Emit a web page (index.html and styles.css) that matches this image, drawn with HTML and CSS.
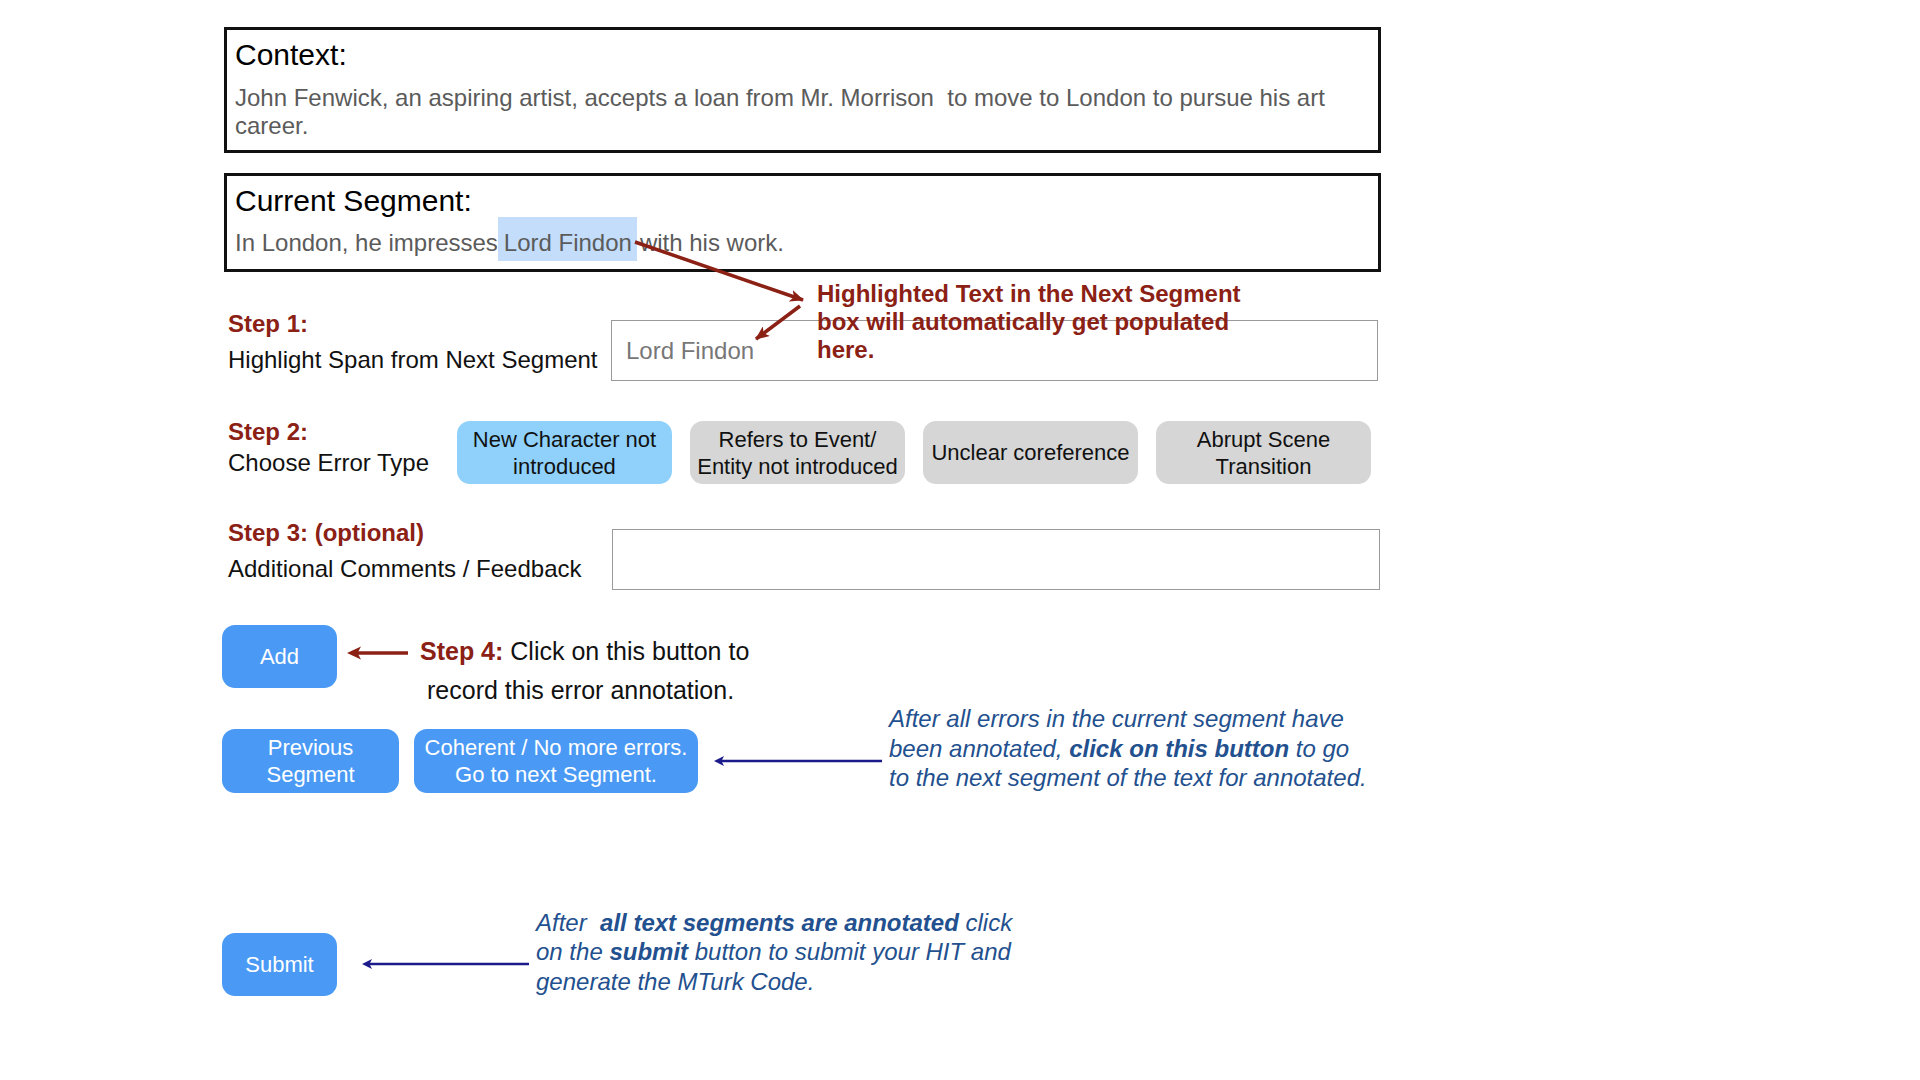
FILE: index.html
```html
<!DOCTYPE html>
<html lang="en">
<head>
<meta charset="utf-8">
<title>Annotation Instructions</title>
<link rel="stylesheet" href="styles.css">
</head>
<body>
<div class="page">
  <div class="box box-context">
    <div class="box-title">Context:</div>
    <div class="box-text">John Fenwick, an aspiring artist, accepts a loan from Mr. Morrison&nbsp; to move to London to pursue his art career.</div>
  </div>
  <div class="box box-segment">
    <div class="box-title">Current Segment:</div>
    <div class="box-text">In London, he impresses<span class="hl">Lord Findon</span>with his work.</div>
  </div>

  <div class="step-row step1">
    <div class="labels">
      <div class="step-label">Step 1:</div>
      <div class="step-desc">Highlight Span from Next Segment</div>
    </div>
    <div class="field">Lord Findon</div>
  </div>

  <div class="step-row step2">
    <div class="labels">
      <div class="step-label">Step 2:</div>
      <div class="step-desc">Choose Error Type</div>
    </div>
    <div class="choices">
      <div class="choice active">New Character not<br>introduced</div>
      <div class="choice">Refers to Event/<br>Entity not introduced</div>
      <div class="choice">Unclear coreference</div>
      <div class="choice">Abrupt Scene<br>Transition</div>
    </div>
  </div>

  <div class="step-row step3">
    <div class="labels">
      <div class="step-label">Step 3: (optional)</div>
      <div class="step-desc">Additional Comments / Feedback</div>
    </div>
    <div class="field"></div>
  </div>

  <div class="action-row add-row">
    <div class="btn btn-add">Add</div>
    <svg class="arrow arrow-add" width="61" height="63" viewBox="0 0 61 63">
      <line x1="9" y1="28" x2="61" y2="28" stroke="#8b2015" stroke-width="3.5"/>
      <path d="M0 28 L14 21.5 L10.5 28 L14 34.5 Z" fill="#8b2015"/>
    </svg>
    <div class="step4">
      <div><b>Step 4:</b> Click on this button to</div>
      <div class="step4-indent">record this error annotation.</div>
    </div>
  </div>

  <div class="action-row nav-row">
    <div class="btn btn-prev">Previous<br>Segment</div>
    <div class="btn btn-next">Coherent / No more errors.<br>Go to next Segment.</div>
    <svg class="arrow arrow-next" width="168" height="64" viewBox="0 0 168 64">
      <line x1="7" y1="32" x2="168" y2="32" stroke="#1b1b8c" stroke-width="2.5"/>
      <path d="M0 32 L10 27 L7.5 32 L10 37 Z" fill="#1b1b8c"/>
    </svg>
    <div class="note">After all errors in the current segment have<br>been annotated, <b>click on this button</b> to go<br>to the next segment of the text for annotated.</div>
  </div>

  <div class="action-row submit-row">
    <div class="btn btn-submit">Submit</div>
    <svg class="arrow arrow-submit" width="167" height="63" viewBox="0 0 167 63">
      <line x1="7" y1="31" x2="167" y2="31" stroke="#1b1b8c" stroke-width="2.5"/>
      <path d="M0 31 L10 26 L7.5 31 L10 36 Z" fill="#1b1b8c"/>
    </svg>
    <div class="note">After&nbsp; <b>all text segments are annotated</b> click<br>on the <b>submit</b> button to submit your HIT and<br>generate the MTurk Code.</div>
  </div>

  <svg class="overlay-arrows" width="1157" height="400" viewBox="0 0 1157 400">
    <defs>
      <marker id="redhead" viewBox="0 0 14 12" refX="13" refY="6" markerWidth="14" markerHeight="12" markerUnits="userSpaceOnUse" orient="auto">
        <path d="M0 0 L14 6 L0 12 L3.5 6 Z" fill="#8b2015"/>
      </marker>
    </defs>
    <line x1="411" y1="242" x2="579" y2="300" stroke="#8b2015" stroke-width="3.5" marker-end="url(#redhead)"/>
    <line x1="576" y1="306" x2="532" y2="339" stroke="#8b2015" stroke-width="3.5" marker-end="url(#redhead)"/>
  </svg>
  <div class="annot">Highlighted Text in the Next Segment<br>box will automatically get populated<br>here.</div>
</div>
</body>
</html>
```

FILE: styles.css
```css
body {
  margin: 0;
  background: #ffffff;
  font-family: "Liberation Sans", Arial, sans-serif;
}

.page {
  position: relative;
  margin-left: 224px;
  width: 1157px;
  padding-top: 27px;
}

/* Context / segment boxes */
.box {
  border: 3px solid #111111;
  padding: 8px 10px 0 8px;
}
.box-context {
  padding-bottom: 10px;
}
.box-segment {
  margin-top: 20px;
  padding-bottom: 12px;
}
.box-title {
  font-size: 30px;
  line-height: 34px;
  color: #000000;
}
.box-text {
  font-size: 24px;
  line-height: 28px;
  color: #5b5b5b;
}
.box-context .box-text {
  margin-top: 12px;
}
.box-segment .box-text {
  margin-top: 11px;
}
.hl {
  background: #c3ddfa;
  padding: 12px 5px 5px 6px;
  margin-right: 3px;
}

/* Step rows */
.step-row {
  display: flex;
  align-items: flex-start;
  padding-left: 4px;
}
.labels {
  flex: none;
}
.step-label {
  font-size: 24px;
  font-weight: bold;
  color: #8b2015;
}
.step-desc {
  font-size: 24px;
  color: #111111;
}
.step1 {
  margin-top: 34px;
}
.step1 .labels {
  width: 383px;
  line-height: 36px;
}
.step2 {
  margin-top: 35px;
}
.step2 .labels {
  width: 229px;
  line-height: 31px;
}
.step3 {
  margin-top: 31px;
}
.step3 .labels {
  width: 384px;
  line-height: 36px;
}

.field {
  flex: none;
  margin-top: 14px;
  width: 767px;
  height: 61px;
  box-sizing: border-box;
  border: 1px solid #9a9a9a;
  padding-left: 14px;
  font-size: 24px;
  line-height: 59px;
  color: #777777;
}
.step3 .field {
  width: 768px;
}

.choices {
  display: flex;
  gap: 18px;
  margin-top: 5px;
}
.choice {
  width: 215px;
  height: 63px;
  border-radius: 13px;
  background: #d6d6d6;
  display: flex;
  align-items: center;
  justify-content: center;
  text-align: center;
  font-size: 22px;
  line-height: 27px;
  color: #111111;
  white-space: nowrap;
}
.choice.active {
  background: #8fd1fb;
}

/* Action rows */
.action-row {
  display: flex;
  margin-left: -2px;
}
.btn {
  flex: none;
  background: #4a9af5;
  color: #ffffff;
  border-radius: 13px;
  font-size: 22px;
  line-height: 27px;
  display: flex;
  align-items: center;
  justify-content: center;
  text-align: center;
}
.arrow {
  flex: none;
  display: block;
}

.add-row {
  align-items: flex-start;
  margin-top: 35px;
  height: 79px;
}
.btn-add {
  width: 115px;
  height: 63px;
}
.arrow-add {
  margin-left: 10px;
}
.step4 {
  margin-left: 12px;
  margin-top: 7px;
  font-size: 25px;
  line-height: 39px;
  color: #111111;
  white-space: nowrap;
}
.step4 b {
  color: #8b2015;
}
.step4-indent {
  padding-left: 7px;
}

.nav-row {
  align-items: flex-end;
}
.btn-prev {
  width: 177px;
  height: 64px;
}
.btn-next {
  width: 284px;
  height: 64px;
  margin-left: 15px;
}
.arrow-next {
  margin-left: 16px;
}

.note {
  margin-left: 7px;
  font-size: 24px;
  line-height: 29.5px;
  font-style: italic;
  color: #23508e;
  white-space: nowrap;
}
.note b {
  font-weight: bold;
}

.submit-row {
  align-items: flex-end;
  margin-top: 115px;
}
.btn-submit {
  width: 115px;
  height: 63px;
}
.arrow-submit {
  margin-left: 25px;
}

/* Overlay annotation */
.overlay-arrows {
  position: absolute;
  left: 0;
  top: 0;
  pointer-events: none;
}
.annot {
  position: absolute;
  left: 593px;
  top: 280px;
  font-size: 24px;
  line-height: 28px;
  font-weight: bold;
  color: #8b2015;
  white-space: nowrap;
}
```
